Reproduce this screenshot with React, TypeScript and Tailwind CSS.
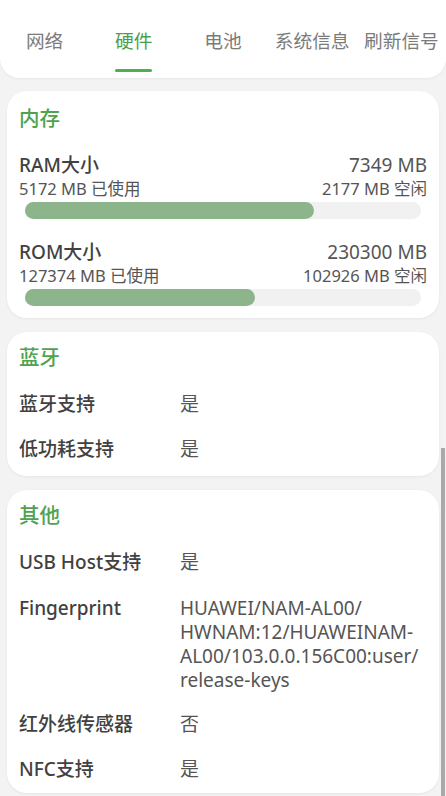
import React from 'react';

const tabs = ['网络', '硬件', '电池', '系统信息', '刷新信号'];

const font = { fontFamily: '"Noto Sans", "Noto Sans CJK SC", sans-serif' };

function Card({ children, className = '' }: { children: React.ReactNode; className?: string }) {
  return (
    <div className={`mx-[7px] rounded-[20px] bg-white px-[12px] shadow-[0_1px_3px_rgba(0,0,0,0.06)] ${className}`}>
      {children}
    </div>
  );
}

function Title({ text, h }: { text: string; h: string }) {
  return (
    <div className={`flex items-center text-[20.5px] font-medium text-[#4fa24f] ${h}`}>{text}</div>
  );
}

function Row({ label, value }: { label: string; value: string }) {
  return (
    <div className="flex h-[45px] items-center text-[19px]">
      <div className="w-[161px] font-medium text-[#414141]">{label}</div>
      <div className="text-[#555]">{value}</div>
    </div>
  );
}

function Usage({ name, total, used, free, pct }: { name: string; total: string; used: string; free: string; pct: number }) {
  return (
    <div>
      <div className="flex h-[24px] items-center justify-between text-[19px]">
        <span className="font-medium text-[#414141]">{name}</span>
        <span className="text-[#555]">{total}</span>
      </div>
      <div className="flex h-[24px] items-center justify-between text-[16.5px] text-[#555]">
        <span>{used}</span>
        <span>{free}</span>
      </div>
      <div className="mx-[6px] mt-[1px] h-[17px] rounded-full bg-[#f1f1f1]">
        <div className="h-full rounded-full bg-[#8db58b]" style={{ width: `${pct}%` }} />
      </div>
    </div>
  );
}

export default function App() {
  return (
    <div className="relative h-[796px] w-[446px] overflow-hidden bg-[#f3f3f3]" style={font}>
      <div className="h-[78px] rounded-b-[20px] bg-white shadow-[0_1px_3px_rgba(0,0,0,0.05)]">
        <div className="grid grid-cols-5 pt-[26px]">
          {tabs.map((t, i) => (
            <div key={t} className="flex flex-col items-center">
              <div className={`h-[30px] whitespace-nowrap text-[18.7px] leading-[30px] ${i === 1 ? 'text-[#4e9c4e]' : 'text-[#7b7b7b]'}`}>{t}</div>
              <div className={`mt-[13px] h-[3px] w-[37px] rounded-full ${i === 1 ? 'bg-[#4caf50]' : 'bg-transparent'}`} />
            </div>
          ))}
        </div>
      </div>

      <div className="mt-[13px] flex flex-col gap-[14px]">
        <Card className="pb-[12px]">
          <Title text="内存" h="h-[54px]" />
          <div className="mt-[8px]">
            <Usage name="RAM大小" total="7349 MB" used="5172 MB 已使用" free="2177 MB 空闲" pct={73} />
          </div>
          <div className="mt-[21px]">
            <Usage name="ROM大小" total="230300 MB" used="127374 MB 已使用" free="102926 MB 空闲" pct={58} />
          </div>
        </Card>

        <Card className="pb-[4px]">
          <Title text="蓝牙" h="h-[50px]" />
          <Row label="蓝牙支持" value="是" />
          <Row label="低功耗支持" value="是" />
        </Card>

        <Card className="pb-[1px]">
          <Title text="其他" h="h-[50px]" />
          <Row label="USB Host支持" value="是" />
          <div className="flex pb-[10px] pt-[11px] text-[19px] leading-[24px]">
            <div className="w-[161px] font-medium text-[#414141]">Fingerprint</div>
            <div className="whitespace-nowrap text-[#555]">
              <div>HUAWEI/NAM-AL00/</div>
              <div>HWNAM:12/HUAWEINAM-</div>
              <div>AL00/103.0.0.156C00:user/</div>
              <div>release-keys</div>
            </div>
          </div>
          <Row label="红外线传感器" value="否" />
          <Row label="NFC支持" value="是" />
        </Card>
      </div>

      <div className="absolute right-[1px] top-[448px] h-[348px] w-[4px] bg-[#a9a9a9]" />
    </div>
  );
}
